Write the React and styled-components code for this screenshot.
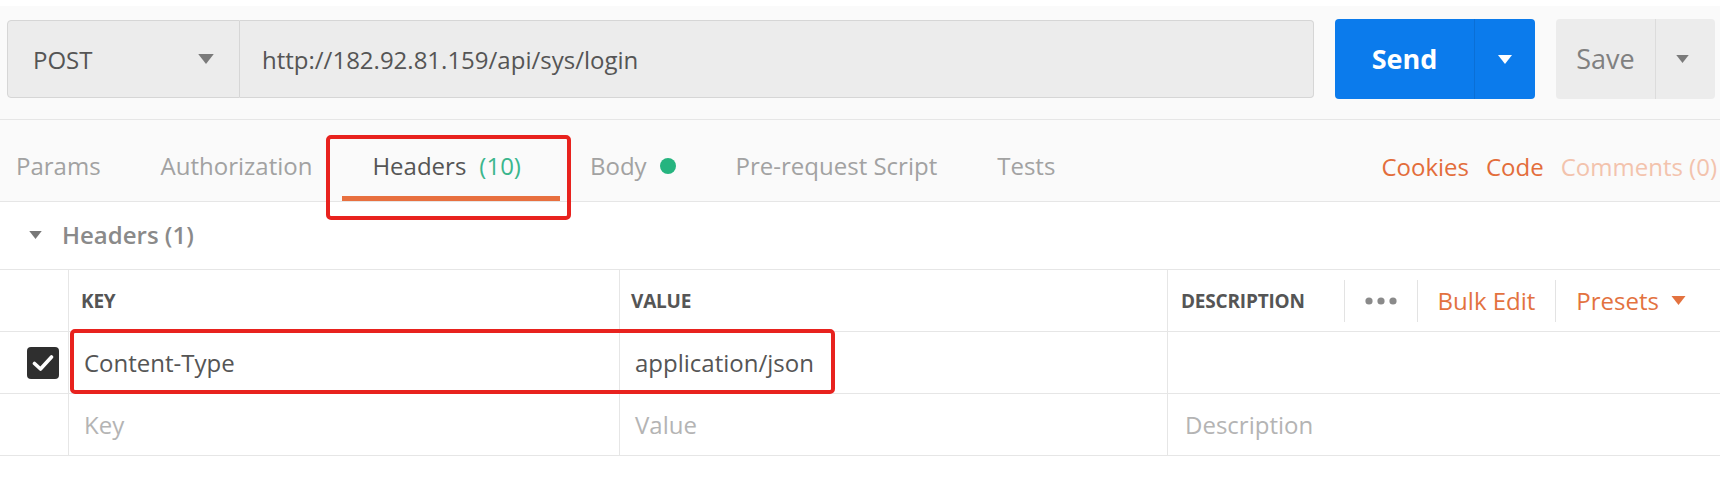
import React from "react";
import styled, { createGlobalStyle } from "styled-components";

const GlobalStyle = createGlobalStyle`
  html, body {
    margin: 0;
    padding: 0;
    background: #ffffff;
    font-family: "Open Sans", "Noto Sans", sans-serif;
  }
  * { box-sizing: border-box; }
`;

const Page = styled.div`
  width: 1720px;
  height: 480px;
  overflow: hidden;
  background: #ffffff;
`;

const RequestBar = styled.div`
  margin-top: 6px;
  height: 114px;
  background: #fafafa;
  border-bottom: 1px solid #e6e6e6;
  display: flex;
  align-items: flex-start;
  padding: 13px 5px 0 7px;
`;

const InputGroup = styled.div`
  flex: 1;
  display: flex;
  height: 80px;
  margin-right: 21px;
  margin-top: 1px;
`;

const MethodSelect = styled.div`
  width: 233px;
  height: 78px;
  display: flex;
  align-items: center;
  justify-content: space-between;
  padding: 0 25px 0 25px;
  background: #ececec;
  border: 1px solid #d6d6d6;
  border-radius: 4px 0 0 4px;
  font-size: 24px;
  color: #555555;
`;

const UrlInput = styled.div`
  flex: 1;
  height: 78px;
  display: flex;
  align-items: center;
  padding-left: 22px;
  background: #ececec;
  border: 1px solid #d6d6d6;
  border-left: none;
  border-radius: 0 4px 4px 0;
  font-size: 24px;
  color: #555555;
`;

const SplitButton = styled.div`
  display: flex;
  height: 80px;
  border-radius: 4px;
  overflow: hidden;
  background: ${p => (p.primary ? "#0b7bec" : "#ececec")};
  color: ${p => (p.primary ? "#ffffff" : "#808080")};
  & + & {
    margin-left: 21px;
  }
`;

const ButtonMain = styled.div`
  width: ${p => p.w}px;
  display: flex;
  align-items: center;
  justify-content: center;
  font-size: 27px;
  font-weight: ${p => (p.bold ? 700 : 400)};
  padding-bottom: 2px;
`;

const ButtonArrow = styled.div`
  width: ${p => p.w}px;
  display: flex;
  align-items: center;
  justify-content: center;
  padding-right: ${p => p.shift || 0}px;
  border-left: 1px solid ${p => (p.primary ? "#0a6fd6" : "#dcdcdc")};
`;

const TabBar = styled.div`
  height: 82px;
  background: #fafafa;
  border-bottom: 1px solid #e6e6e6;
  display: flex;
  align-items: stretch;
  padding: 0 3px 0 16px;
`;

const Tab = styled.div`
  position: relative;
  display: flex;
  align-items: center;
  gap: 13px;
  padding: 14px ${p => (p.active ? 39 : 30)}px 0 30px;
  border-bottom: 5px solid ${p => (p.active ? "#e8703f" : "transparent")};
  font-size: 24px;
  color: ${p => (p.active ? "#555555" : "#a2a2a2")};
  &:first-child {
    padding-left: 0;
  }
`;

const Highlight = styled.div`
  position: absolute;
  border: 4px solid #e8221e;
  border-radius: 5px;
  pointer-events: none;
  top: ${p => p.top}px;
  left: ${p => p.left}px;
  width: ${p => p.width}px;
  height: ${p => p.height}px;
`;

const Count = styled.span`
  color: #3bb68d;
`;

const Dot = styled.span`
  width: 16px;
  height: 16px;
  border-radius: 50%;
  background: #26b47f;
  margin-top: 2px;
`;

const TabLinks = styled.div`
  margin-left: auto;
  display: flex;
  align-items: center;
  gap: 17px;
  padding-top: 12px;
  font-size: 24px;
`;

const TabLink = styled.span`
  color: ${p => (p.muted ? "#f3c3ad" : "#e36d3a")};
`;

const SectionTitle = styled.div`
  height: 67px;
  display: flex;
  align-items: center;
  gap: 19px;
  padding: 0 0 2px 28px;
  font-size: 24px;
  font-weight: 600;
  color: #8a8a8a;
`;

const Table = styled.div`
  border-top: 1px solid #e6e6e6;
`;

const Row = styled.div`
  position: relative;
  display: grid;
  grid-template-columns: 68px 551px 548px 1fr;
  height: 62px;
  border-bottom: 1px solid #e6e6e6;
`;

const Cell = styled.div`
  display: flex;
  align-items: center;
  padding-left: ${p => p.pad || 15}px;
  border-left: ${p => (p.first ? "none" : "1px solid #e6e6e6")};
  font-size: ${p => (p.head ? 19 : 24)}px;
  font-weight: ${p => (p.head ? 700 : 400)};
  color: ${p => (p.placeholder ? "#b4b4b4" : p.head ? "#555555" : "#555555")};
  letter-spacing: ${p => (p.head ? "-0.2px" : "0")};
`;

const CheckCell = styled(Cell)`
  justify-content: flex-end;
  padding-left: 0;
  padding-right: 9px;
`;

const CheckBox = styled.div`
  width: 32px;
  height: 32px;
  border-radius: 4px;
  background: #2f2f2f;
  display: flex;
  align-items: center;
  justify-content: center;
`;

const Actions = styled.div`
  margin-left: auto;
  display: flex;
  align-items: center;
  padding-right: 14px;
  height: 42px;
`;

const Action = styled.div`
  height: 100%;
  display: flex;
  align-items: center;
  gap: 12px;
  padding: 0 20px;
  border-left: 1px solid #e3e3e3;
  font-size: 24px;
  font-weight: 400;
  letter-spacing: 0;
  color: ${p => (p.orange ? "#e3723f" : "#8a8a8a")};
`;

const Caret = ({ w = 14, h = 9, color = "#7a7a7a" }) => (
  <svg width={w} height={h} viewBox="0 0 14 9">
    <polygon points="0,0 14,0 7,9" fill={color} />
  </svg>
);

const Dots = () => (
  <svg width="32" height="8" viewBox="0 0 32 8">
    <circle cx="4" cy="4" r="3.6" fill="#8a8a8a" />
    <circle cx="16" cy="4" r="3.6" fill="#8a8a8a" />
    <circle cx="28" cy="4" r="3.6" fill="#8a8a8a" />
  </svg>
);

const Check = () => (
  <svg width="22" height="18" viewBox="0 0 22 18">
    <path d="M2.5 9.5 L8.5 15 L19.5 3" fill="none" stroke="#ffffff" strokeWidth="3.6" strokeLinecap="round" strokeLinejoin="round" />
  </svg>
);

const tabs = [
  { id: "params", label: "Params" },
  { id: "auth", label: "Authorization" },
  { id: "headers", label: "Headers", count: "(10)", active: true },
  { id: "body", label: "Body", dot: true },
  { id: "pre", label: "Pre-request Script" },
  { id: "tests", label: "Tests" }
];

export default function App() {
  return (
    <Page>
      <GlobalStyle />
      <RequestBar>
        <InputGroup>
          <MethodSelect>
            <span>POST</span>
            <Caret w={16} h={10} />
          </MethodSelect>
          <UrlInput>http://182.92.81.159/api/sys/login</UrlInput>
        </InputGroup>
        <SplitButton primary>
          <ButtonMain w={139} bold>Send</ButtonMain>
          <ButtonArrow w={61} primary>
            <Caret w={14} h={9} color="#ffffff" />
          </ButtonArrow>
        </SplitButton>
        <SplitButton>
          <ButtonMain w={99}>Save</ButtonMain>
          <ButtonArrow w={60} shift={6}>
            <Caret w={13} h={8} />
          </ButtonArrow>
        </SplitButton>
      </RequestBar>

      <TabBar>
        {tabs.map(t => (
          <Tab key={t.id} active={t.active}>
            <span>{t.label}</span>
            {t.count && <Count>{t.count}</Count>}
            {t.dot && <Dot />}
            {t.active && <Highlight top={15} left={-16} width={245} height={85} />}
          </Tab>
        ))}
        <TabLinks>
          <TabLink>Cookies</TabLink>
          <TabLink>Code</TabLink>
          <TabLink muted>Comments (0)</TabLink>
        </TabLinks>
      </TabBar>

      <SectionTitle>
        <Caret w={15} h={8} color="#777777" />
        <span>Headers (1)</span>
      </SectionTitle>

      <Table>
        <Row>
          <Cell first />
          <Cell head pad={12}>KEY</Cell>
          <Cell head pad={11}>VALUE</Cell>
          <Cell head pad={13}>
            DESCRIPTION
            <Actions>
              <Action><Dots /></Action>
              <Action orange>Bulk Edit</Action>
              <Action orange>
                Presets
                <Caret w={15} h={9} color="#e3723f" />
              </Action>
            </Actions>
          </Cell>
        </Row>
        <Row>
          <CheckCell first>
            <CheckBox><Check /></CheckBox>
          </CheckCell>
          <Cell>Content-Type</Cell>
          <Cell>application/json</Cell>
          <Cell />
          <Highlight top={-3} left={70} width={765} height={65} />
        </Row>
        <Row>
          <Cell first />
          <Cell placeholder>Key</Cell>
          <Cell placeholder>Value</Cell>
          <Cell placeholder pad={17}>Description</Cell>
        </Row>
      </Table>
    </Page>
  );
}
